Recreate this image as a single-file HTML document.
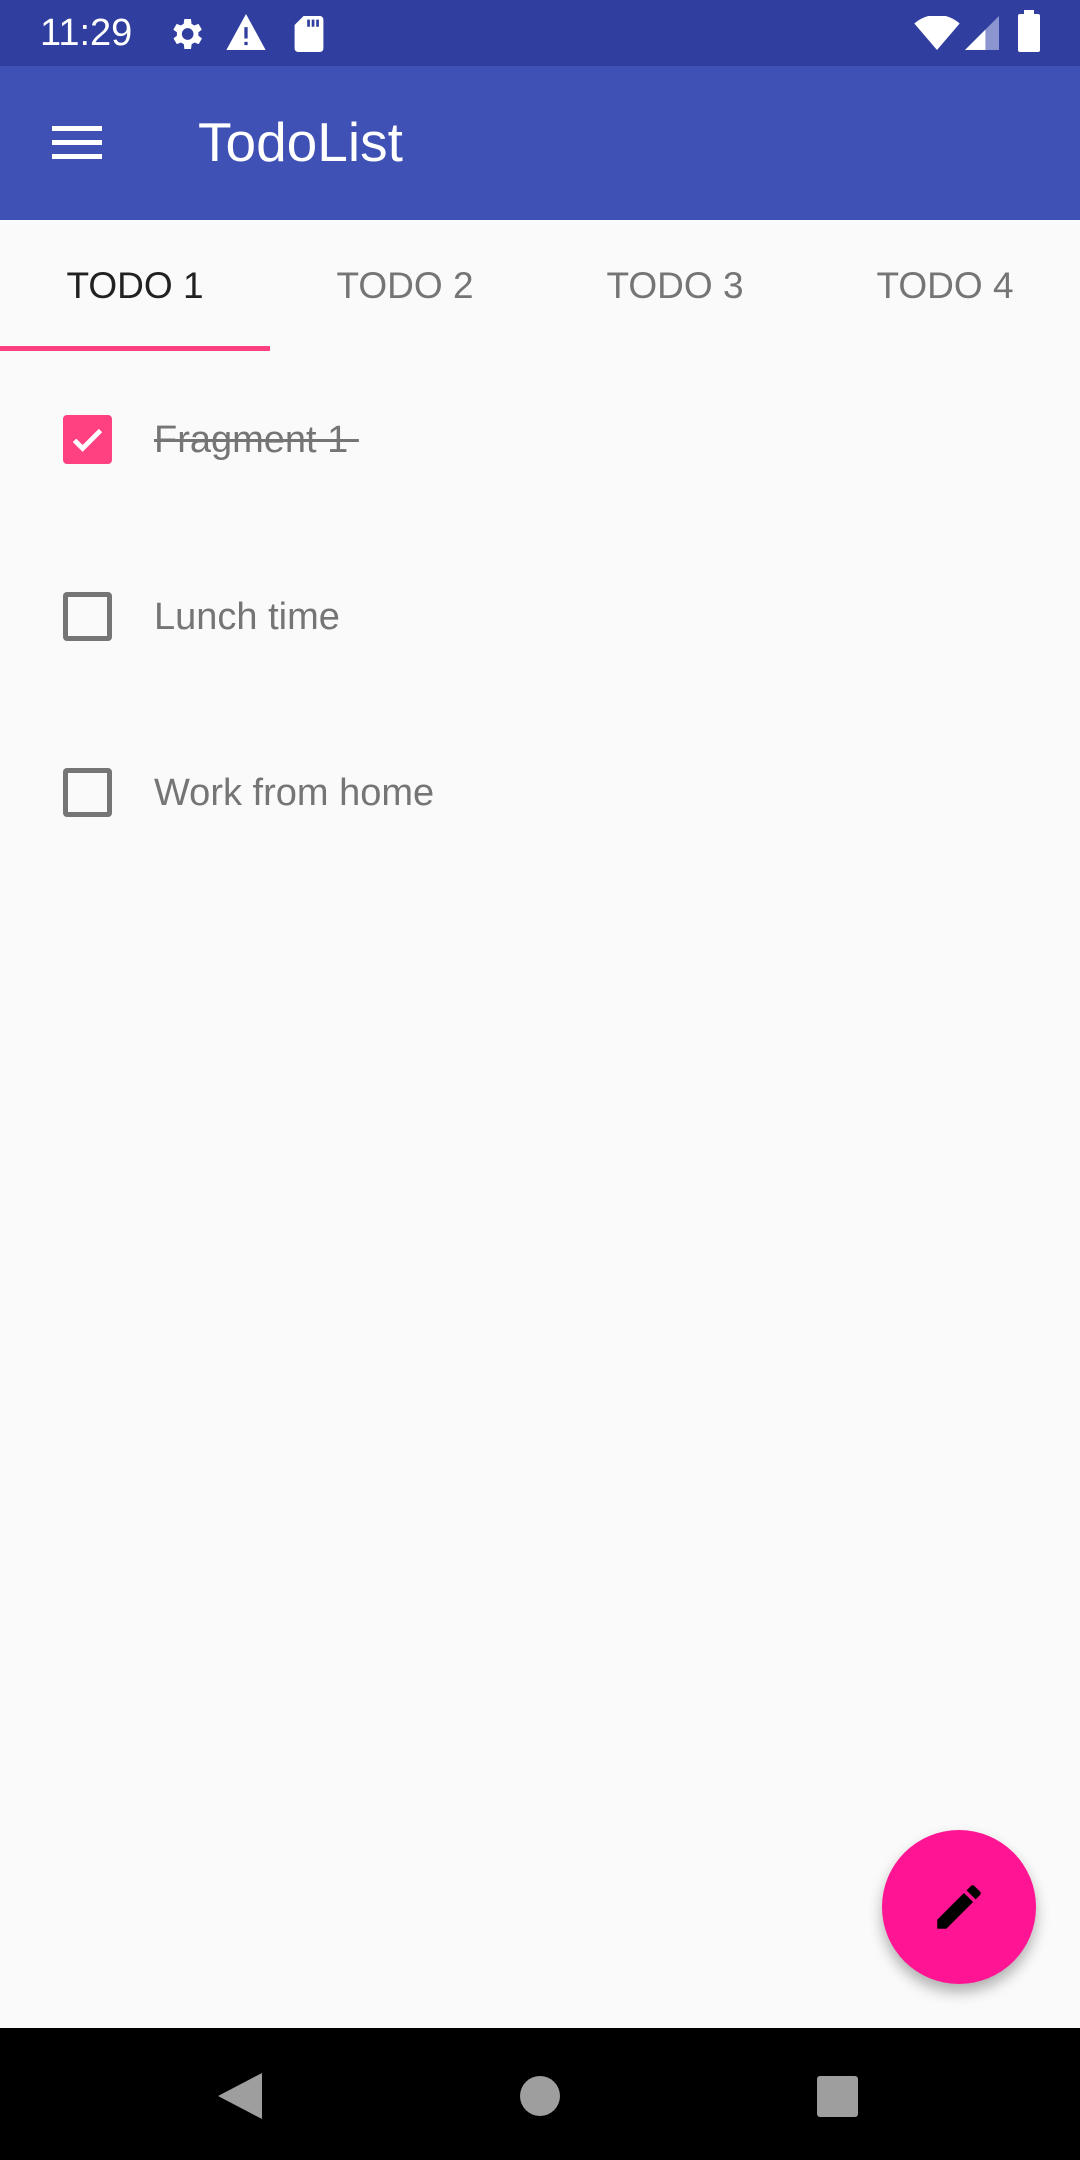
<!DOCTYPE html>
<html><head><meta charset="utf-8"><style>
*{margin:0;padding:0;box-sizing:border-box}
body{width:1080px;height:2160px;background:#FAFAFA;font-family:"Liberation Sans",sans-serif;position:relative;overflow:hidden}
.sb{position:absolute;top:0;left:0;width:1080px;height:66px;background:#303F9F;color:#fff}
.ab{position:absolute;top:66px;left:0;width:1080px;height:154px;background:#3F51B5}
.tabs{position:absolute;top:220px;left:0;width:1080px;height:131px}
.tab{position:absolute;top:0;width:270px;height:131px;line-height:132px;text-align:center;font-size:37px;color:#757575}
.ind{position:absolute;left:0;top:346px;width:270px;height:5px;background:#FF4081}
.row{position:absolute;left:63px;width:900px;height:50px}
.cb{position:absolute;left:0;top:0;width:49px;height:49px;border:5px solid #757575;border-radius:4px}
.row span{position:absolute;left:91px;top:0;line-height:50px;font-size:38px;color:#757575}
.nav{position:absolute;top:2028px;left:0;width:1080px;height:132px;background:#000}
.fab{position:absolute;left:882px;top:1830px;width:154px;height:154px;border-radius:50%;background:#FF1493;box-shadow:0 8px 14px rgba(0,0,0,.3)}
</style></head><body>
<div class="sb">
<div style="position:absolute;left:40px;top:12px;font-size:38px">11:29</div>
<svg style="position:absolute;left:166px;top:14px" width="40" height="40" viewBox="0 0 24 24"><path fill="#fff" d="M19.4 13a7.5 7.5 0 0 0 0-2l2.1-1.6-2-3.5-2.5 1a7 7 0 0 0-1.7-1L15 3h-4l-.4 2.9a7 7 0 0 0-1.7 1l-2.5-1-2 3.5L6.6 11a7.5 7.5 0 0 0 0 2l-2.1 1.6 2 3.5 2.5-1a7 7 0 0 0 1.7 1L11 21h4l.4-2.9a7 7 0 0 0 1.7-1l2.5 1 2-3.5zM13 15.5a3.5 3.5 0 1 1 0-7 3.5 3.5 0 0 1 0 7z"/></svg>
<svg style="position:absolute;left:226px;top:14px" width="40" height="36" viewBox="0 0 24 22"><path fill="#fff" d="M12 0L0 22h24zM11 8h2v7h-2zm0 9h2v2h-2z" fill-rule="evenodd"/></svg>
<svg style="position:absolute;left:294px;top:16px" width="30" height="36" viewBox="0 0 16 20"><path fill="#fff" d="M5 0h9a2 2 0 0 1 2 2v16a2 2 0 0 1-2 2H2a2 2 0 0 1-2-2V5z"/><path fill="#303F9F" d="M7 2h1.5v4H7zm2.5 0H11v4H9.5zm2.5 0h1.5v4H12z"/></svg>
<svg style="position:absolute;left:914px;top:16px" width="46" height="34" viewBox="0 0 24 18"><path fill="#fff" d="M12 18L0 4a18 18 0 0 1 24 0z"/></svg>
<svg style="position:absolute;left:964px;top:16px" width="36" height="34" viewBox="0 0 20 20"><path fill="#8B95D0" d="M20 0v20H0z"/><path fill="#fff" d="M12 8v12H0z"/></svg>
<div style="position:absolute;left:1018px;top:14px;width:22px;height:38px;background:#fff;border-radius:2px"></div>
<div style="position:absolute;left:1024px;top:10px;width:10px;height:6px;background:#fff"></div>
</div>
<div class="ab">
<div style="position:absolute;left:52px;top:60px;width:50px;height:5px;background:#fff"></div>
<div style="position:absolute;left:52px;top:74px;width:50px;height:5px;background:#fff"></div>
<div style="position:absolute;left:52px;top:88px;width:50px;height:5px;background:#fff"></div>
<div style="position:absolute;left:198px;top:44px;font-size:55px;color:#fff;line-height:64px">TodoList</div>
</div>
<div class="tabs">
<div class="tab" style="left:0;color:#212121">TODO 1</div>
<div class="tab" style="left:270px">TODO 2</div>
<div class="tab" style="left:540px">TODO 3</div>
<div class="tab" style="left:810px">TODO 4</div>
</div>
<div class="ind"></div>
<div class="row" style="top:415px"><div class="cb" style="background:#FF4081;border-color:#FF4081"><svg width="39" height="39" viewBox="0 0 24 24" style="position:absolute;left:0;top:0"><path d="M4 12.5l5 5L20 6.5" stroke="#fff" stroke-width="3" fill="none"/></svg></div><span style="text-decoration:line-through">Fragment 1&nbsp;</span></div>
<div class="row" style="top:592px"><div class="cb"></div><span>Lunch time</span></div>
<div class="row" style="top:768px"><div class="cb"></div><span>Work from home</span></div>
<div class="fab"><svg style="position:absolute;left:48px;top:48px" width="58" height="58" viewBox="0 0 24 24"><path fill="#000" d="M3 17.25V21h3.75L17.81 9.94l-3.75-3.75zM20.71 7.04a1 1 0 0 0 0-1.41l-2.34-2.34a1 1 0 0 0-1.41 0l-1.83 1.83 3.75 3.75z"/></svg></div>
<div class="nav">
<svg style="position:absolute;left:218px;top:45px" width="44" height="46" viewBox="0 0 22 23"><path fill="#9E9E9E" d="M22 0v23L0 11.5z"/></svg>
<div style="position:absolute;left:520px;top:48px;width:40px;height:40px;border-radius:50%;background:#9E9E9E"></div>
<div style="position:absolute;left:817px;top:48px;width:41px;height:41px;border-radius:3px;background:#9E9E9E"></div>
</div>
</body></html>
